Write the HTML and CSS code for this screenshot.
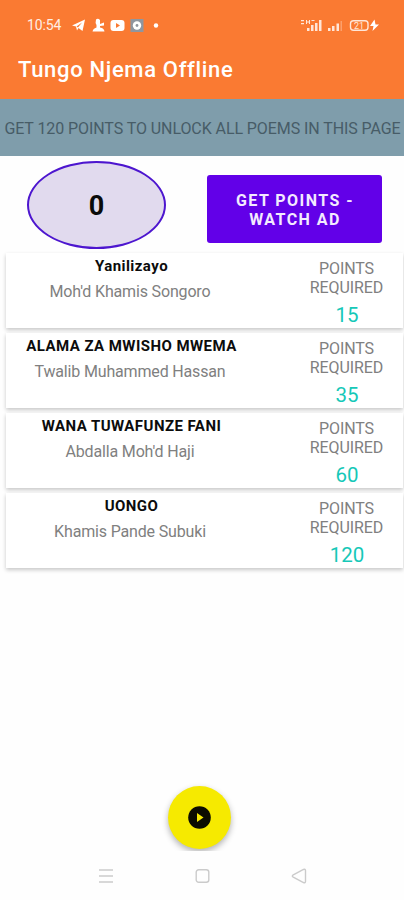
FILE: index.html
```html
<!DOCTYPE html>
<html lang="en">
<head>
  <meta charset="UTF-8" />
  <meta name="viewport" content="width=device-width, initial-scale=1.0" />
  <title>Tungo Njema Offline</title>
  <link rel="stylesheet" href="styles.css">
</head>
<body>
  <!-- Header -->
  <header>
    <div class="status-bar">
      <span class="time">10:54</span>
      <svg class="notifications" width="92" height="16" viewBox="0 0 92 16">
        <path d="M0 8.500 13 2.500 10.500 14 6.500 11 5 13.500 4 9.500Z" fill="#fff" />
        <path d="M4.500 9.500 10 5.500 6 10.500Z" fill="#fa7a32" />
        <path d="M24 2.500q2-1.500 4 .5v4l4-1.500v3l-4 .5v1.500q4 .5 4.500 4H20.500q.5-3 4-4V8q-1.500-2-.5-5.500Z" fill="#fff" />
        <rect x="38.500" y="3" width="14" height="11" rx="3" fill="#fff" />
        <path d="M44 6v5l4-2.500Z" fill="#fa7a32" />
        <rect x="58.500" y="2" width="13" height="13" fill="#8f969f" />
        <circle cx="65" cy="8.500" r="4.200" fill="#fff" />
        <circle cx="65" cy="8.500" r="1.400" fill="#8f969f" />
        <circle cx="84" cy="8.500" r="2.200" fill="#fff" />
      </svg>
      <svg class="signals" width="79" height="16" viewBox="0 0 79 16">
        <g fill="#ffe6d8">
          <path d="M1 3h3v1.200H1ZM1 6h3v1.200H1Z" />
          <path d="M6 3h1v4H6ZM7 4.500h2v1H7ZM9 3h1v4H9ZM11.500 3h3v1h-3Z" />
          <path d="M7 11h2.500v3H7ZM11 8h2.500v6H11ZM15 6h2.500v8H15ZM19 3h2.500v11H19Z" />
          <path d="M28 11h2.500v3H28ZM32 9h2.500v5H32ZM36.500 6.500H39V14h-2.500Z" />
          <path d="M40.500 4h1.500v10h-1.500Z" opacity=".35" />
          <path d="M74.500 2.500 70 9h3.500L72.500 14 79 7.500h-3.500Z" fill="#fff" />
        </g>
        <rect x="50.500" y="3.700" width="17.500" height="9.600" rx="3" fill="none" stroke="#ffe6d8" stroke-width="1.400" />
        <text x="59" y="11.500" text-anchor="middle" class="battery">21</text>
      </svg>
    </div>
    <h1>Tungo Njema Offline</h1>
  </header>

  <div class="banner">GET 120 POINTS TO UNLOCK ALL POEMS IN THIS PAGE</div>

  <!-- Points -->
  <section class="points-section">
    <div class="points-count">0</div>
    <button class="btn">GET POINTS -<br>WATCH AD</button>
  </section>

  <!-- Poems -->
  <main class="poem-list">
    <div class="poem-card">
      <div class="details">
        <h2>Yanilizayo</h2>
        <p>Moh'd Khamis Songoro</p>
      </div>
      <div class="required">
        POINTS<br>REQUIRED
        <span class="points">15</span>
      </div>
    </div>
    <div class="poem-card">
      <div class="details">
        <h2>ALAMA ZA MWISHO MWEMA</h2>
        <p>Twalib Muhammed Hassan</p>
      </div>
      <div class="required">
        POINTS<br>REQUIRED
        <span class="points">35</span>
      </div>
    </div>
    <div class="poem-card">
      <div class="details">
        <h2>WANA TUWAFUNZE FANI</h2>
        <p>Abdalla Moh'd Haji</p>
      </div>
      <div class="required">
        POINTS<br>REQUIRED
        <span class="points">60</span>
      </div>
    </div>
    <div class="poem-card">
      <div class="details">
        <h2>UONGO</h2>
        <p>Khamis Pande Subuki</p>
      </div>
      <div class="required">
        POINTS<br>REQUIRED
        <span class="points">120</span>
      </div>
    </div>
  </main>

  <div class="play-area">
    <button class="play-btn" aria-label="Play">
      <svg width="24" height="24" viewBox="0 0 24 24">
        <circle cx="11.500" cy="11.500" r="11.300" fill="#0c0c00" />
        <path d="M9 7v9l6.500-4.500Z" fill="#f6ea00" />
      </svg>
    </button>
  </div>

  <!-- Navigation bar -->
  <nav class="nav-bar">
    <svg width="16" height="16" viewBox="0 0 16 16">
      <path d="M1 2h14M1 8h14M1 14h14" />
    </svg>
    <svg width="16" height="16" viewBox="0 0 16 16">
      <rect x="1.200" y="1.700" width="12.600" height="12.600" rx="2.500" />
    </svg>
    <svg width="16" height="16" viewBox="0 0 16 16">
      <path d="M1.800 7.200 12.500 1.500q2-.8 2 1v11q0 1.800-2 1L1.800 8.800q-1-.8 0-1.600Z" />
    </svg>
  </nav>
</body>
</html>
```

FILE: styles.css
```css
body {
  margin: 0;
  height: 900px;
  display: flex;
  flex-direction: column;
  overflow: hidden;
  font-family: Roboto, sans-serif;
  background-color: #fefefe;
}
header {
  height: 99px;
  background: #fa7a32;
  color: #fff;
}
.status-bar {
  display: flex;
  align-items: center;
  height: 16px;
  padding: 17px 25px 0 27px;
}
.time {
  width: 45px;
  font-size: 14px;
  letter-spacing: -0.1px;
  color: #ffeee4;
}
.signals {
  margin-left: auto;
}
.battery {
  font-size: 9px;
  fill: #ffe6d8;
}
h1 {
  margin: 23px 0 0 18px;
  font-size: 22px;
  line-height: 28px;
  font-weight: 500;
  letter-spacing: 0.67px;
}
.banner {
  height: 57px;
  line-height: 59px;
  background: #7f9dab;
  color: #475c67;
  font-size: 16px;
  letter-spacing: -0.08px;
  text-indent: 1px;
  text-align: center;
  white-space: nowrap;
}
.points-section {
  display: flex;
  justify-content: space-between;
  height: 92px;
  padding: 5px 22px 0 27px;
}
.points-count {
  box-sizing: border-box;
  width: 139px;
  height: 88px;
  border: 2px solid #4d16cf;
  border-radius: 50%;
  background: #e1daee;
  color: #0a0a0a;
  font-size: 27px;
  font-weight: 700;
  line-height: 86px;
  text-align: center;
}
.btn {
  width: 175px;
  height: 68px;
  margin-top: 14px;
  padding: 2px 0 0 1px;
  border: none;
  border-radius: 3px;
  background: #6200e8;
  color: #f3eaff;
  font-family: inherit;
  font-size: 16px;
  font-weight: 700;
  line-height: 19px;
  letter-spacing: 1.45px;
}
.poem-list {
  display: flex;
  flex-direction: column;
  gap: 5px;
  padding: 0 1px 0 6px;
}
.poem-card {
  display: flex;
  justify-content: space-between;
  height: 75px;
  background: #fff;
  box-shadow: 0 2px 4px rgba(0, 0, 0, 0.22);
}
.details {
  width: 251px;
  padding-top: 3px;
  text-align: center;
}
.details h2 {
  margin: 0;
  font-size: 15px;
  line-height: 20px;
  font-weight: 700;
  letter-spacing: 0.45px;
  color: #0c0c0c;
}
.details p {
  margin: 5px 3px 0 0;
  font-size: 16px;
  line-height: 21px;
  letter-spacing: -0.16px;
  color: #808080;
}
.required {
  width: 113px;
  padding-top: 6px;
  font-size: 16px;
  line-height: 19px;
  letter-spacing: -0.1px;
  text-align: center;
  color: #808080;
}
.points {
  display: block;
  margin-top: 6px;
  font-size: 20.5px;
  line-height: 25px;
  letter-spacing: 0;
  text-indent: 1px;
  color: #16c8b8;
}
.play-area {
  display: flex;
  justify-content: center;
  margin-top: auto;
  height: 76px;
  padding: 11px 5px 0 0;
  overflow: hidden;
  box-sizing: border-box;
}
.play-btn {
  width: 63px;
  height: 63px;
  padding: 0;
  border: none;
  border-radius: 50%;
  background: #f6ea00;
  box-shadow: 0 3px 6px rgba(0, 0, 0, 0.3);
}
.play-btn svg {
  display: block;
  margin: auto;
}
.nav-bar {
  display: flex;
  justify-content: space-between;
  height: 49px;
  padding: 17px 97px 0 98px;
  box-sizing: border-box;
}
.nav-bar svg {
  fill: none;
  stroke: #cbcbcb;
  stroke-width: 1.4;
}
```
